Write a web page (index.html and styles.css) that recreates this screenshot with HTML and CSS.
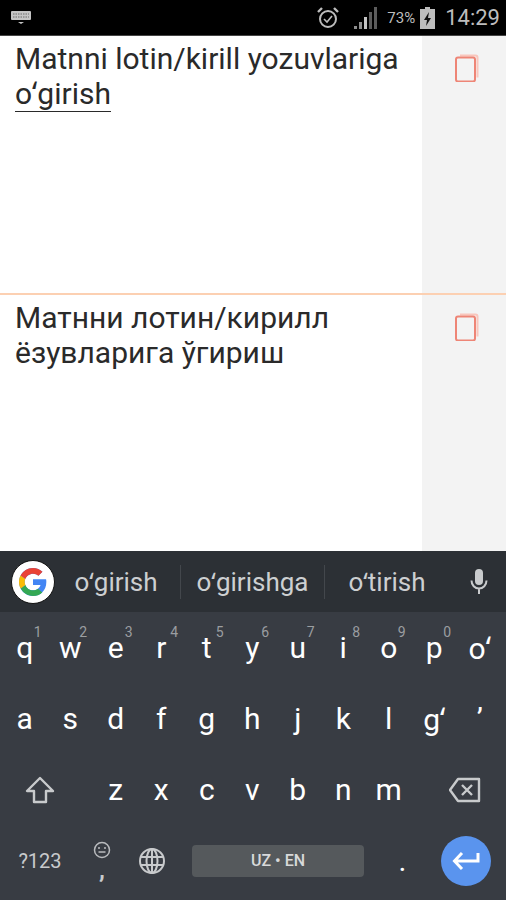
FILE: index.html
```html
<!DOCTYPE html>
<html lang="uz">
<head>
    <meta charset="UTF-8">
    <meta name="viewport" content="width=device-width, initial-scale=1.0">
    <title>Matnni lotin/kirill yozuvlariga oʻgirish</title>
    <link rel="stylesheet" href="styles.css">
</head>
<body>
    <div class="status-bar">
        <svg class="status-keyboard" width="20" height="13" viewBox="0 0 20 13">
            <rect x="0" y="0" width="20" height="9" rx="1" fill="#c4c4c4"/>
            <path d="M2 3h16M2 6h16" stroke="#6a6a6a" stroke-width="1" stroke-dasharray="1.5 1"/>
            <path d="M7 11l3 2 3-2z" fill="#c4c4c4"/>
        </svg>
        <div class="status-right">
            <svg width="24" height="24" viewBox="0 0 24 24" fill="none" stroke="#bdbdbd" stroke-width="2">
                <circle cx="12" cy="13" r="8"/>
                <path d="M8 13l3 3 5-6" stroke-width="1.6"/>
                <path d="M2 6l4-4M22 6l-4-4" stroke-width="2.4"/>
            </svg>
            <svg class="status-signal" width="23" height="24" viewBox="0 0 23 24" fill="#8e8e8e">
                <rect x="0" y="20" width="3" height="3"/>
                <rect x="5" y="16" width="3" height="7"/>
                <rect x="10" y="11" width="3" height="12" fill="#c4c4c4"/>
                <rect x="15" y="6" width="3" height="17" fill="#5c5c5c"/>
                <rect x="20" y="1" width="3" height="22" fill="#5c5c5c"/>
            </svg>
            <span class="status-percent">73%</span>
            <svg class="status-battery" width="15" height="22" viewBox="0 0 15 22">
                <path d="M5 0h5v2h5v20H0V2h5z" fill="#bdbdbd"/>
                <path d="M9 5l-5 8h3l-1 6 5-8H8z" fill="#111"/>
            </svg>
            <span class="status-time">14:29</span>
        </div>
    </div>

    <div class="panel panel-top">
        <div class="panel-text">Matnni lotin/kirill yozuvlariga <span class="composing">oʻgirish</span></div>
        <div class="panel-side">
            <svg class="copy-icon" width="24" height="28" viewBox="0 0 24 28" fill="none">
                <path d="M5 1.500h15.500a2 2 0 0 1 2 2v20" stroke="#f9c6bc" stroke-width="2"/>
                <rect x="1" y="3.500" width="19" height="24" rx="2" stroke="#ee8576" stroke-width="2"/>
            </svg>
        </div>
    </div>
    <div class="panel panel-bottom">
        <div class="panel-text">Матнни лотин/кирилл ёзувларига ўгириш</div>
        <div class="panel-side">
            <svg class="copy-icon" width="24" height="28" viewBox="0 0 24 28" fill="none">
                <path d="M5 1.500h15.500a2 2 0 0 1 2 2v20" stroke="#f9c6bc" stroke-width="2"/>
                <rect x="1" y="3.500" width="19" height="24" rx="2" stroke="#ee8576" stroke-width="2"/>
            </svg>
        </div>
    </div>

    <div class="keyboard">
        <div class="suggestions">
            <div class="google-badge">
                <svg width="32" height="32" viewBox="0 0 48 48">
                    <path d="M43.600 20H24v8.500h11.300C33.700 33.400 29.300 36.500 24 36.500c-6.900 0-12.500-5.600-12.500-12.500S17.100 11.500 24 11.500c3.100 0 6 1.100 8.200 3l6-6C34.500 5.100 29.500 3 24 3 12.400 3 3 12.400 3 24s9.400 21 21 21c10.500 0 20-7.600 20-21 0-1.300-.1-2.700-.4-4z" fill="#4285f4"/>
                    <path d="M5.400 14.300l7 5.100C14.200 14.900 18.700 11.500 24 11.500c3.100 0 6 1.100 8.200 3l6-6C34.500 5.100 29.500 3 24 3 15.900 3 9 7.600 5.400 14.300z" fill="#ea4335"/>
                    <path d="M24 45c5.400 0 10.300-2 14-5.400l-6.500-5.500c-2 1.500-4.600 2.400-7.500 2.400-5.300 0-9.700-3.100-11.300-8l-7 5.400C9 40.300 15.900 45 24 45z" fill="#34a853"/>
                    <path d="M5.400 14.300C3.900 17.200 3 20.500 3 24s.9 6.800 2.600 9.900l7-5.400c-.7-1.300-1.100-2.900-1.100-4.500s.4-3.200.9-4.600z" fill="#fbbc05"/>
                </svg>
            </div>
            <span class="suggestion suggestion-first">oʻgirish</span>
            <span class="suggestion-divider"></span>
            <span class="suggestion suggestion-second">oʻgirishga</span>
            <span class="suggestion-divider"></span>
            <span class="suggestion suggestion-third">oʻtirish</span>
            <svg class="mic-icon" width="18" height="28" viewBox="0 0 18 28" fill="none">
                <rect x="5" y="1" width="8" height="16" rx="4" fill="#c9cbcd"/>
                <path d="M1.500 12.500c0 4.500 3.400 8 7.500 8s7.500-3.500 7.500-8M9 20.500V26" stroke="#c9cbcd" stroke-width="2"/>
            </svg>
        </div>

        <div class="key-row">
            <span class="key">q<sup class="hint">1</sup></span>
            <span class="key">w<sup class="hint">2</sup></span>
            <span class="key">e<sup class="hint">3</sup></span>
            <span class="key">r<sup class="hint">4</sup></span>
            <span class="key">t<sup class="hint">5</sup></span>
            <span class="key">y<sup class="hint">6</sup></span>
            <span class="key">u<sup class="hint">7</sup></span>
            <span class="key">i<sup class="hint">8</sup></span>
            <span class="key">o<sup class="hint">9</sup></span>
            <span class="key">p<sup class="hint">0</sup></span>
            <span class="key">oʻ</span>
        </div>
        <div class="key-row">
            <span class="key">a</span>
            <span class="key">s</span>
            <span class="key">d</span>
            <span class="key">f</span>
            <span class="key">g</span>
            <span class="key">h</span>
            <span class="key">j</span>
            <span class="key">k</span>
            <span class="key">l</span>
            <span class="key">gʻ</span>
            <span class="key">ʼ</span>
        </div>
        <div class="key-row">
            <span class="key key-wide key-shift">
                <svg width="30" height="28" viewBox="0 0 30 28" fill="none" stroke="#c8cacc" stroke-width="2.400" stroke-linejoin="round">
                    <path d="M15 2L2 15h7v11h12V15h7z"/>
                </svg>
            </span>
            <span class="key">z</span>
            <span class="key">x</span>
            <span class="key">c</span>
            <span class="key">v</span>
            <span class="key">b</span>
            <span class="key">n</span>
            <span class="key">m</span>
            <span class="key key-wide key-back">
                <svg width="32" height="26" viewBox="0 0 32 26" fill="none" stroke="#c8cacc" stroke-width="2.400" stroke-linejoin="round">
                    <path d="M9 2h21v22H9L1 13z"/>
                    <path d="M13 8l10 10M23 8L13 18"/>
                </svg>
            </span>
        </div>
        <div class="key-row">
            <span class="key key-wide key-symbols">?123</span>
            <span class="key key-emoji">
                <svg width="18" height="18" viewBox="0 0 18 18" fill="none" stroke="#b9bbbe" stroke-width="1.500">
                    <circle cx="9" cy="9" r="7.500"/>
                    <path d="M5 7h2M11 7h2M5.500 11h7"/>
                </svg>
                <span class="emoji-comma">,</span>
            </span>
            <span class="key key-globe">
                <svg width="28" height="28" viewBox="0 0 28 28" fill="none" stroke="#c8cacc" stroke-width="2">
                    <circle cx="14" cy="14" r="12"/>
                    <ellipse cx="14" cy="14" rx="5.500" ry="12"/>
                    <path d="M2 10h24M2 18h24M14 2v24"/>
                </svg>
            </span>
            <span class="key key-space"><span class="space-bar">UZ • EN</span></span>
            <span class="key key-period">.</span>
            <span class="key key-enter">
                <span class="enter-circle">
                    <svg width="28" height="20" viewBox="0 0 28 20" fill="none" stroke="#ffffff" stroke-width="3">
                        <path d="M26 2v8H3M10 2L2.500 10l7.500 8"/>
                    </svg>
                </span>
            </span>
        </div>
    </div>
</body>
</html>
```

FILE: styles.css
```css
* {
    box-sizing: border-box;
}

body {
    font-family: Roboto, "Noto Sans", sans-serif;
    background-color: #ffffff;
    margin: 0;
    padding: 0;
    width: 506px;
    height: 900px;
    overflow: hidden;
    display: flex;
    flex-direction: column;
}

/* Status bar */
.status-bar {
    height: 36px;
    background-color: #000000;
    border-bottom: 1px solid #444;
    display: flex;
    align-items: center;
    justify-content: space-between;
    padding: 0 6px 0 11px;
    color: #bdbdbd;
}

.status-right {
    display: flex;
    align-items: center;
}

.status-signal {
    margin-left: 14px;
}

.status-percent {
    font-size: 15px;
    margin-left: 10px;
}

.status-battery {
    margin-left: 5px;
}

.status-time {
    font-size: 22px;
    margin-left: 10px;
}

/* Text panels */
.panel {
    display: flex;
}

.panel-top {
    height: 259px;
    border-bottom: 2px solid #fcd0b2;
}

.panel-bottom {
    height: 256px;
}

.panel-text {
    flex: 1;
    padding: 5px 15px 0;
    font-size: 30px;
    line-height: 35px;
    color: #2a2a2a;
}

.composing {
    border-bottom: 1px solid #2a2a2a;
    padding-bottom: 0;
}

.panel-side {
    width: 84px;
    background-color: #f3f3f3;
    display: flex;
    justify-content: center;
    align-items: flex-start;
    padding-top: 18px;
}

.copy-icon {
    margin-left: 5px;
}

/* Keyboard */
.keyboard {
    flex: 1;
    background-color: #383c43;
    color: #ffffff;
}

.suggestions {
    height: 61px;
    background-color: #2c3035;
    display: flex;
    align-items: center;
    color: #cdcfd1;
    font-size: 26px;
}

.google-badge {
    width: 44px;
    height: 44px;
    margin-left: 11px;
    border-radius: 50%;
    background-color: #ffffff;
    border: 1px solid #111;
    display: flex;
    align-items: center;
    justify-content: center;
    flex-shrink: 0;
}

.suggestion {
    display: block;
    text-align: center;
    flex-shrink: 0;
    margin-bottom: 2px;
}

.suggestion-first {
    width: 125px;
    padding-right: 3px;
}

.suggestion-second {
    width: 143px;
}

.suggestion-third {
    width: 124px;
}

.suggestion-divider {
    width: 1px;
    height: 34px;
    background-color: #43474c;
    flex-shrink: 0;
}

.mic-icon {
    margin-left: 21px;
    flex-shrink: 0;
}

.key-row {
    height: 71px;
    display: flex;
    padding: 0 2px;
}

.key {
    position: relative;
    width: 45.5px;
    display: flex;
    align-items: center;
    justify-content: center;
    font-size: 30px;
    flex-shrink: 0;
}

.hint {
    position: absolute;
    top: 13px;
    right: 6px;
    font-size: 14px;
    line-height: 14px;
    color: #9b9ea1;
}

.key-wide {
    width: 80px;
}

.key-shift {
    margin-left: -2px;
    margin-right: 13px;
}

.key-back {
    margin-left: 13px;
}

.key-symbols {
    margin-left: -2px;
    font-size: 20px;
    color: #c8cacc;
}

.key-emoji {
    width: 44px;
    flex-direction: column;
    color: #c8cacc;
}

.emoji-comma {
    font-size: 24px;
    font-weight: 700;
    line-height: 22px;
}

.key-globe {
    width: 56px;
}

.key-space {
    width: 172px;
    margin-left: 12px;
}

.space-bar {
    width: 172px;
    height: 32px;
    background-color: #55595c;
    border-radius: 4px;
    font-size: 16px;
    font-weight: 500;
    color: #d8d9da;
    display: flex;
    align-items: center;
    justify-content: center;
}

.key-period {
    width: 77px;
}

.key-enter {
    width: 50px;
}

.enter-circle {
    width: 50px;
    height: 50px;
    border-radius: 50%;
    background-color: #5a94ee;
    display: flex;
    align-items: center;
    justify-content: center;
}
```
